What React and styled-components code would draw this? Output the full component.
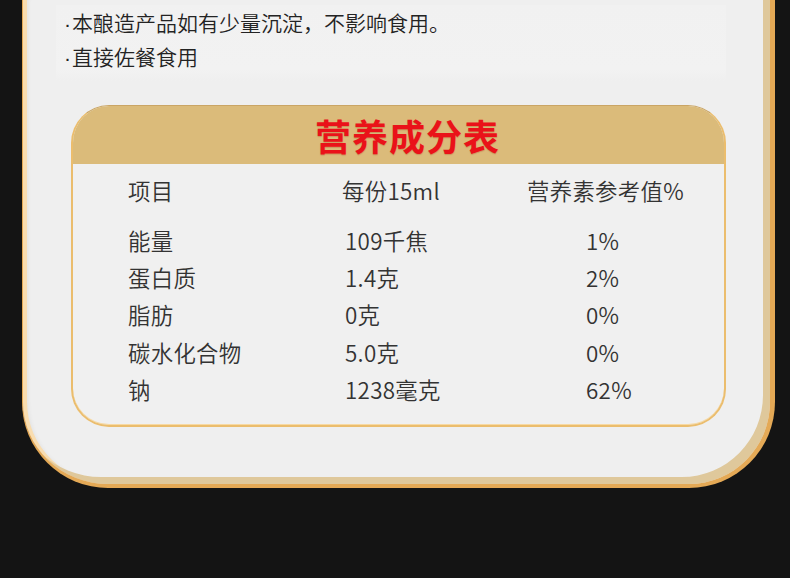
import React from "react";
import styled, { createGlobalStyle } from "styled-components";

const GlobalStyle = createGlobalStyle`
  html, body {
    margin: 0;
    padding: 0;
    background: #141414;
  }
  body {
    font-family: "Noto Sans CJK SC", "Noto Sans", sans-serif;
  }
`;

const nutrients = [
  { name: "能量", amount: "109千焦", nrv: "1%" },
  { name: "蛋白质", amount: "1.4克", nrv: "2%" },
  { name: "脂肪", amount: "0克", nrv: "0%" },
  { name: "碳水化合物", amount: "5.0克", nrv: "0%" },
  { name: "钠", amount: "1238毫克", nrv: "62%" },
];

const Page = styled.div`
  width: 790px;
  height: 578px;
  overflow: hidden;
  background: #141414;
`;

const Card = styled.div`
  box-sizing: border-box;
  width: 753px;
  height: 488px;
  margin-left: 22px;
  background: #efefef;
  border-style: solid;
  border-color: #e4a956;
  border-width: 0 5px 4px 1px;
  border-radius: 0 0 86px 86px;
  box-shadow: inset -7px -7px 0 #dfc89b, inset 4px 0 0 #f9ddb0,
    inset 8px 0 4px -3px rgba(0, 0, 0, 0.06);
  padding: 5px 0 0 38px;
`;

const Notice = styled.div`
  width: 662px;
  margin-left: -5px;
  padding: 0 0 8px 8px;
  background: linear-gradient(180deg, #f1f1f1 0%, #f2f2f2 85%, #efefef 100%);
`;

const NoticeLine = styled.p`
  margin: 0;
  font-size: 21px;
  font-weight: 350;
  line-height: 34px;
  color: #232323;
  white-space: nowrap;
`;

const Dot = styled.span`
  font-family: "Liberation Sans", sans-serif;
  display: inline-block;
  width: 8px;
  line-height: 1;
`;

const Panel = styled.div`
  box-sizing: border-box;
  width: 655px;
  height: 322px;
  margin: 24px 0 0 10px;
  border: 2px solid #ebbd6d;
  border-top: 1px solid #caa565;
  border-radius: 38px;
  overflow: hidden;
  background: #f0f0f0;
  box-shadow: inset 0 -1px 0 #f7d9a3;
`;

const Banner = styled.div`
  height: 58px;
  background: #dbbb7a;
  display: flex;
  align-items: center;
  justify-content: center;
  padding-left: 18px;
`;

const Title = styled.h2`
  margin: 0;
  font-size: 36px;
  font-weight: 700;
  color: #ea1219;
  letter-spacing: 1px;
  text-shadow: 0 1px 1px rgba(150, 30, 0, 0.25);
`;

const Table = styled.div`
  display: grid;
  grid-template-columns: 214px 185px 1fr;
  padding: 8px 0 0 55px;
`;

const Cell = styled.div`
  font-size: 22.4px;
  font-weight: 350;
  line-height: 37.3px;
  letter-spacing: 0.3px;
  color: #333333;
  white-space: nowrap;
  padding-left: ${(p) => p.$indent || 0}px;
  margin-bottom: ${(p) => (p.$head ? 12.5 : 0)}px;
`;

export default function App() {
  return (
    <Page>
      <GlobalStyle />
      <Card>
        <Notice>
          <NoticeLine>
            <Dot>·</Dot>本酿造产品如有少量沉淀，不影响食用。
          </NoticeLine>
          <NoticeLine>
            <Dot>·</Dot>直接佐餐食用
          </NoticeLine>
        </Notice>
        <Panel>
          <Banner>
            <Title>营养成分表</Title>
          </Banner>
          <Table>
            <Cell $head>项目</Cell>
            <Cell $head>每份15ml</Cell>
            <Cell $head>营养素参考值%</Cell>
            {nutrients.map((n) => (
              <React.Fragment key={n.name}>
                <Cell>{n.name}</Cell>
                <Cell $indent={3}>{n.amount}</Cell>
                <Cell $indent={59}>{n.nrv}</Cell>
              </React.Fragment>
            ))}
          </Table>
        </Panel>
      </Card>
    </Page>
  );
}
